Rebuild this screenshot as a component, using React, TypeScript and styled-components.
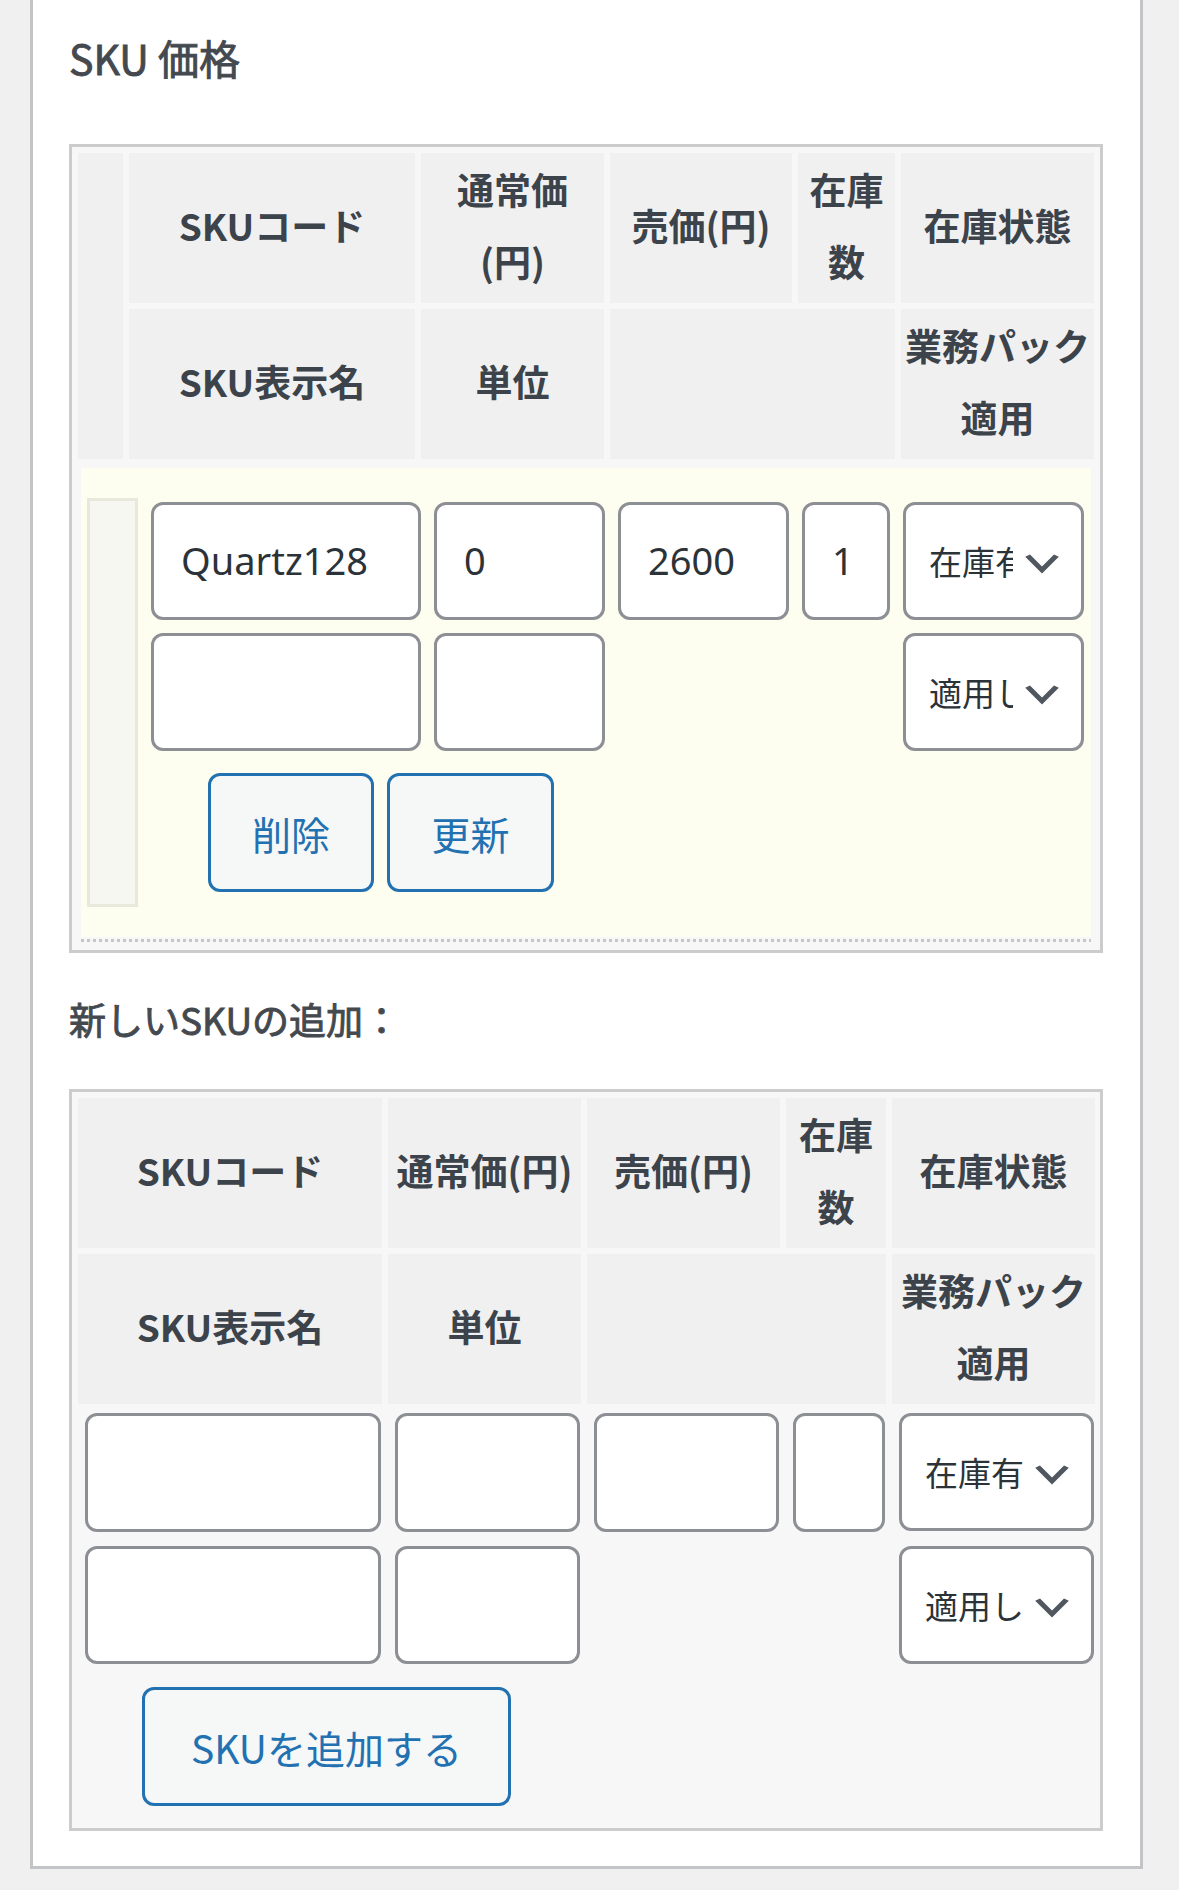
import React from "react";
import styled, { createGlobalStyle } from "styled-components";

const GlobalStyle = createGlobalStyle`
    html, body {
        margin: 0;
        padding: 0;
        background: #f0f0f1;
    }
    body {
        font-family: "Noto Sans CJK JP", "Noto Sans", sans-serif;
        color: #3c434a;
    }
    * {
        box-sizing: border-box;
    }
`;

// columns of both tables
const EDIT_HEAD_COLS = "45px 286px 183px 182px 97px 193px";
const ADD_COLS = "304px 193px 193px 100px 203px";

const Chevron: React.FC = () => (
    <ChevronIcon viewBox="0 0 20 20" width="48" height="48" aria-hidden>
        <path d="M5 6l5 5 5-5 2 1-7 7-7-7 2-1z" fill="#50575e" />
    </ChevronIcon>
);

const Select: React.FC<{ value: string; options: string[] }> = ({ value, options }) => (
    <SelectWrap>
        <SelectBox defaultValue={value}>
            {options.map((o) => (
                <option key={o} value={o}>{o}</option>
            ))}
        </SelectBox>
        <Chevron />
    </SelectWrap>
);

const STOCK = ["在庫有", "在庫僅少", "売切れ", "入荷待ち"];
const PACK = ["適用しない", "適用する"];

const App: React.FC = () => {
    return (
        <>
            <GlobalStyle />
            <Page>
                <Panel>
                    <Heading $bottom={57} $size={41}>SKU 価格</Heading>

                    <Frame>
                        <HeaderGrid $cols={EDIT_HEAD_COLS}>
                            <Th $col="1" $row="1 / span 2" />
                            <Th $col="2" $row="1">SKUコード</Th>
                            <Th $col="3" $row="1">通常価<br />(円)</Th>
                            <Th $col="4" $row="1">売価(円)</Th>
                            <Th $col="5" $row="1">在庫<br />数</Th>
                            <Th $col="6" $row="1">在庫状態</Th>
                            <Th $col="2" $row="2">SKU表示名</Th>
                            <Th $col="3" $row="2">単位</Th>
                            <Th $col="4 / span 2" $row="2" />
                            <Th $col="6" $row="2">業務パック<br />適用</Th>
                        </HeaderGrid>

                        <BodyCell>
                            <EditRow>
                                <DragHandle />
                                <EditGrid>
                                    <TextInput defaultValue="Quartz128" />
                                    <TextInput defaultValue="0" />
                                    <TextInput defaultValue="2600" />
                                    <TextInput defaultValue="1" />
                                    <Select value="在庫有" options={STOCK} />
                                    <GridSlot $col="1"><TextInput defaultValue="" /></GridSlot>
                                    <GridSlot $col="2"><TextInput defaultValue="" /></GridSlot>
                                    <GridSlot $col="5"><Select value="適用しない" options={PACK} /></GridSlot>
                                    <ButtonRow $col="1 / span 2" $shift={6}>
                                        <ActionButton $w={166}>削除</ActionButton>
                                        <ActionButton $w={167}>更新</ActionButton>
                                    </ButtonRow>
                                </EditGrid>
                            </EditRow>
                            <DottedRule />
                        </BodyCell>
                    </Frame>

                    <Heading $top={36} $bottom={40} $size={37}>新しいSKUの追加：</Heading>

                    <Frame $bottom={0}>
                        <HeaderGrid $cols={ADD_COLS}>
                            <Th $col="1" $row="1">SKUコード</Th>
                            <Th $col="2" $row="1">通常価(円)</Th>
                            <Th $col="3" $row="1">売価(円)</Th>
                            <Th $col="4" $row="1">在庫<br />数</Th>
                            <Th $col="5" $row="1">在庫状態</Th>
                            <Th $col="1" $row="2">SKU表示名</Th>
                            <Th $col="2" $row="2">単位</Th>
                            <Th $col="3 / span 2" $row="2" />
                            <Th $col="5" $row="2">業務パック<br />適用</Th>
                        </HeaderGrid>

                        <AddGrid>
                            <Td $col="1"><TextInput defaultValue="" /></Td>
                            <Td $col="2"><TextInput defaultValue="" /></Td>
                            <Td $col="3"><TextInput defaultValue="" /></Td>
                            <Td $col="4"><TextInput defaultValue="" /></Td>
                            <Td $col="5"><Select value="在庫有" options={STOCK} /></Td>
                            <Td $col="1"><TextInput defaultValue="" /></Td>
                            <Td $col="2"><TextInput defaultValue="" /></Td>
                            <Td $col="5"><Select value="適用しない" options={PACK} /></Td>
                            <ButtonRow $col="1 / span 2" $shift={-6}>
                                <ActionButton $w={369}>SKUを追加する</ActionButton>
                            </ButtonRow>
                        </AddGrid>
                    </Frame>
                </Panel>
            </Page>
        </>
    );
};

const Page = styled.div`
    padding: 0 36px 22px 30px;
`;

const Panel = styled.div`
    background: #fff;
    border: 3px solid #c3c4c7;
    border-top: none;
    padding: 27px 37px 35px 36px;
`;

// semi-bold look: regular face with a thin stroke
const Heading = styled.h2<{ $top?: number; $bottom: number; $size?: number }>`
    margin: ${(p) => p.$top ?? 0}px 0 ${(p) => p.$bottom}px;
    font-size: ${(p) => p.$size ?? 40}px;
    font-weight: 400;
    line-height: 60px;
    color: #44494f;
    -webkit-text-stroke: 0.9px #44494f;
`;

const Frame = styled.div<{ $bottom?: number }>`
    border: 3px solid #cccccc;
    background: #f7f7f7;
    padding: 6px 6px ${(p) => p.$bottom ?? 6}px;
`;

const HeaderGrid = styled.div<{ $cols: string }>`
    display: grid;
    grid-template-columns: ${(p) => p.$cols};
    grid-template-rows: 150px 150px;
    gap: 6px;
`;

const Th = styled.div<{ $col: string; $row: string }>`
    grid-column: ${(p) => p.$col};
    grid-row: ${(p) => p.$row};
    display: flex;
    align-items: center;
    justify-content: center;
    padding-bottom: 7px;
    background: #f0f0f0;
    font-size: 37px;
    font-weight: 700;
    line-height: 72px;
    text-align: center;
    white-space: nowrap;
    color: #3c434a;
`;

const BodyCell = styled.div`
    margin-top: 6px;
    padding: 3px 3px 2px;
`;

const EditRow = styled.div`
    display: flex;
    gap: 13px;
    padding: 30px 7px 30px 6px;
    background: #fefef0;
`;

const DragHandle = styled.div`
    width: 51px;
    flex: none;
    background: #f7f7f2;
    border: 3px solid #e8e9da;
`;

const EditGrid = styled.div`
    display: grid;
    grid-template-columns: 270px 171px 171px 88px 181px;
    grid-template-rows: 118px 118px auto;
    gap: 13px;
    padding: 4px 0 15px;
`;

const GridSlot = styled.div<{ $col: string }>`
    grid-column: ${(p) => p.$col};
`;

const DottedRule = styled.div`
    height: 3px;
    margin-top: 2px;
    background: repeating-linear-gradient(90deg, #c6c6c6 0 3px, transparent 3px 6px);
`;

const AddGrid = styled.div`
    display: grid;
    grid-template-columns: ${ADD_COLS};
    grid-template-rows: 119px 118px auto;
    column-gap: 6px;
    row-gap: 14px;
    padding: 9px 0 22px;
`;

const Td = styled.div<{ $col: string }>`
    grid-column: ${(p) => p.$col};
    padding: 0 1px 0 7px;
`;

const TextInput = styled.input`
    display: block;
    width: 100%;
    height: 100%;
    min-height: 118px;
    margin: 0;
    padding: 0 27px 3px;
    border: 3px solid #8c8f94;
    border-radius: 12px;
    background: #fff;
    color: #2c3338;
    font-family: "Noto Sans", "Noto Sans CJK JP", sans-serif;
    font-size: 38px;
    outline: none;
`;

const SelectWrap = styled.div`
    position: relative;
    height: 118px;
`;

const SelectBox = styled.select`
    display: block;
    width: 100%;
    height: 100%;
    margin: 0;
    padding: 0 68px 0 23px;
    border: 3px solid #8c8f94;
    border-radius: 12px;
    background: #fff;
    color: #2c3338;
    font-family: "Noto Sans CJK JP", sans-serif;
    font-size: 33px;
    appearance: none;
    -webkit-appearance: none;
    outline: none;
`;

const ChevronIcon = styled.svg`
    position: absolute;
    right: 18px;
    top: calc(3px + (100% - 54px) * 0.55);
    pointer-events: none;
`;

const ButtonRow = styled.div<{ $col: string; $shift: number }>`
    grid-column: ${(p) => p.$col};
    display: flex;
    justify-content: center;
    gap: 13px;
    margin-top: 9px;
    padding-left: ${(p) => Math.max(p.$shift, 0)}px;
    padding-right: ${(p) => Math.max(-p.$shift, 0)}px;
`;

const ActionButton = styled.button<{ $w: number }>`
    width: ${(p) => p.$w}px;
    height: 119px;
    padding: 0;
    border: 3px solid #2271b1;
    border-radius: 12px;
    background: #f6f7f7;
    color: #2271b1;
    font-family: "Noto Sans CJK JP", sans-serif;
    font-size: 39px;
    cursor: pointer;
`;

export default App;
